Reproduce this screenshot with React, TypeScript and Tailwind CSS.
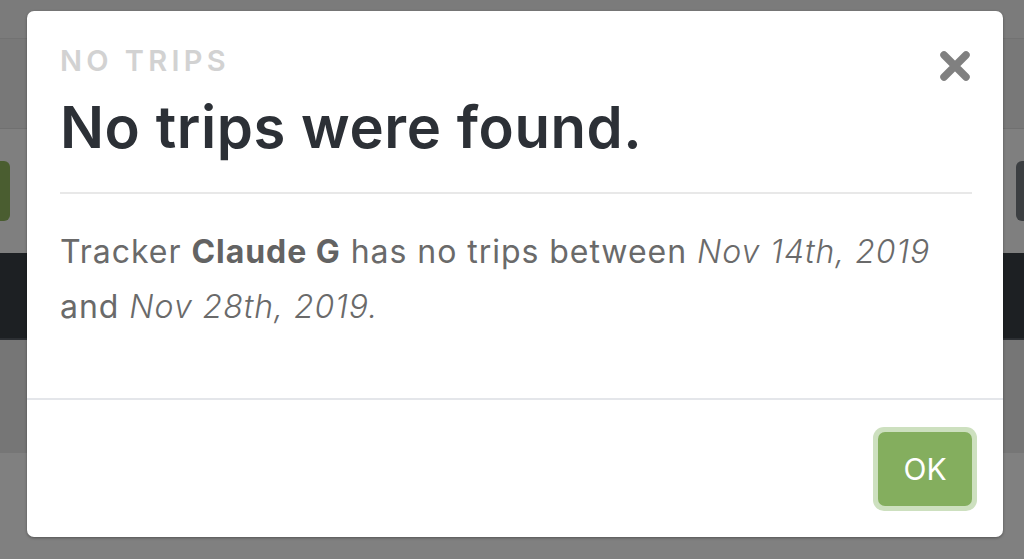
import React from 'react';

function CloseIcon() {
  return (
    <svg width="34" height="34" viewBox="0 0 34 34" aria-hidden="true">
      <path d="M6 6 L28 28 M28 6 L6 28" stroke="#808080" strokeWidth="7.5" strokeLinecap="round" />
    </svg>
  );
}

export default function App() {
  return (
    <div className="relative w-[1024px] h-[559px] overflow-hidden bg-[#808080]">
      {/* dimmed page underneath */}
      <div className="flex flex-col">
        <div className="h-[39px] bg-[#7b7b7b] border-b border-[#727272]" />
        <div className="h-[90px] bg-[#787878] border-b border-[#707070]" />
        <div className="h-[124px] bg-[#7f7f7f] flex items-center justify-between">
          <div className="w-[10px] h-[60px] rounded-r-md bg-[#4a5d30]" />
          <div className="w-[8px] h-[60px] rounded-l-md bg-[#3b3e41]" />
        </div>
        <div className="h-[87px] bg-[#1d2023] border-b-2 border-[#2c2f33]" />
        <div className="h-[113px] bg-[#767676]" />
      </div>

      {/* modal */}
      <div className="absolute left-[27px] top-[11px] w-[976px] h-[526px] rounded-[7px] bg-white shadow-[0_1px_3px_rgba(0,0,0,0.35)] flex flex-col">
        <div className="px-[33px] pt-[35px] relative">
          <div className="text-[29px] leading-[30px] font-semibold tracking-[0.15em] text-[#d2d2d2] font-['Inter',sans-serif]">
            NO TRIPS
          </div>
          <h2 className="mt-[19px] text-[58px] leading-[64px] font-semibold text-[#2c3036] font-['Inter',sans-serif] tracking-[0.01em]">
            No trips were found.
          </h2>
          <button className="absolute right-[31px] top-[38px]" aria-label="Close">
            <CloseIcon />
          </button>
          <div className="mt-[33px] mr-[-2px] h-[2px] bg-[#e8e8e8]" />
        </div>
        <div className="px-[33px] pt-[30px] pb-[64px] text-[32px] leading-[55px] tracking-[0.03em] text-[#6a6a6a] font-['Inter',sans-serif]">
          Tracker <span className="font-bold text-[#636363]">Claude G</span> has no trips between{' '}
          <em className="font-light">Nov 14th, 2019</em> and <em className="font-light">Nov 28th, 2019.</em>
        </div>
        <div className="border-t-2 border-[#e4e6ea] flex-1 flex items-start justify-end pr-[26px] pt-[27px]">
          <button className="w-[104px] h-[84px] rounded-[11px] bg-[#cde0bf] p-[5px]">
            <span className="w-full h-full rounded-[7px] bg-[#84ae5e] flex items-center justify-center text-white text-[30px] font-['Inter',sans-serif]">
              OK
            </span>
          </button>
        </div>
      </div>
    </div>
  );
}
